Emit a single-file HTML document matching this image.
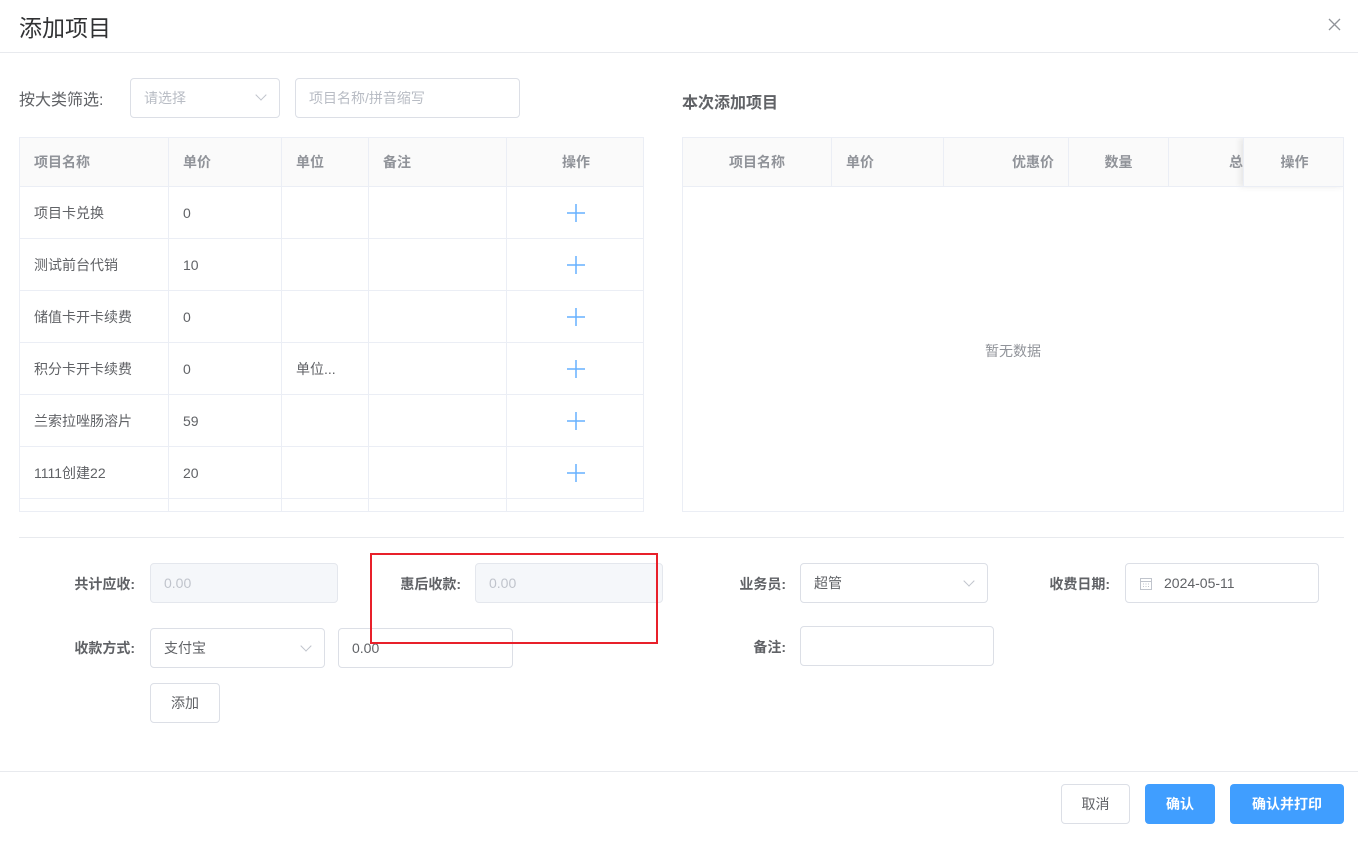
<!DOCTYPE html><html><head><meta charset="utf-8"><style>
*{box-sizing:border-box;margin:0;padding:0}
body{width:1358px;height:845px;background:#fff;font-family:"Liberation Sans","Noto Sans CJK SC",sans-serif;color:#606266;font-size:14px;position:relative;overflow:hidden}
.a{position:absolute}
.inp{position:absolute;border:1px solid #dcdfe6;border-radius:4px;background:#fff;display:flex;align-items:center;padding-left:13px;font-size:14px;color:#606266}
.dis{background:#f5f7fa;border-color:#e4e7ed;color:#c0c4cc}
.lbl{position:absolute;font-weight:bold;color:#606266;text-align:right;font-size:14px}
.chev{position:absolute;right:14px;top:13px;width:8px;height:8px;border-right:1px solid #c0c4cc;border-bottom:1px solid #c0c4cc;transform:rotate(45deg)}
table{border-collapse:collapse;position:absolute;table-layout:fixed}
td,th{border:1px solid #ebeef5;padding-left:14px;text-align:left;font-size:14px}
th{background:#fafafa;color:#909399;font-weight:bold;height:49px}
td{height:52px;color:#606266}
.plus{text-align:center;padding:0}
.plus svg{display:block;margin:0 auto}
.btn{position:absolute;border-radius:4px;display:flex;align-items:center;justify-content:center;font-size:14px}
</style></head><body>
<div class="a" style="left:19px;top:9px;font-size:23px;color:#303133">添加项目</div>
<svg class="a" style="left:1328px;top:18px" width="13" height="13"><path d="M1 1L12 12M12 1L1 12" stroke="#909399" stroke-width="1.3"/></svg>
<div class="a" style="left:0;top:52px;width:1358px;height:1px;background:#e8eaee"></div>

<div class="a" style="left:19px;top:86px;font-size:16px;color:#606266">按大类筛选:</div>
<div class="inp" style="left:130px;top:78px;width:150px;height:40px;color:#b8bcc4">请选择<div class="chev" style="top:12px"></div></div>
<div class="inp" style="left:295px;top:78px;width:225px;height:40px;color:#b8bcc4">项目名称/拼音缩写</div>
<div class="a" style="left:682px;top:89px;font-size:16px;font-weight:bold;color:#606266">本次添加项目</div>

<div class="a" style="left:19px;top:137px;width:625px;height:375px;overflow:hidden;border:1px solid #ebeef5">
<table style="left:-1px;top:-1px;width:626px">
<colgroup><col style="width:149px"><col style="width:113px"><col style="width:87px"><col style="width:138px"><col style="width:139px"></colgroup>
<tr><th>项目名称</th><th>单价</th><th>单位</th><th>备注</th><th style="text-align:center;padding:0">操作</th></tr>
<tr><td>项目卡兑换</td><td>0</td><td></td><td></td><td class="plus"><svg width="18" height="18"><path d="M9 0V18M0 9H18" stroke="#66b1ff" stroke-width="1.5"/></svg></td></tr>
<tr><td>测试前台代销</td><td>10</td><td></td><td></td><td class="plus"><svg width="18" height="18"><path d="M9 0V18M0 9H18" stroke="#66b1ff" stroke-width="1.5"/></svg></td></tr>
<tr><td>储值卡开卡续费</td><td>0</td><td></td><td></td><td class="plus"><svg width="18" height="18"><path d="M9 0V18M0 9H18" stroke="#66b1ff" stroke-width="1.5"/></svg></td></tr>
<tr><td>积分卡开卡续费</td><td>0</td><td>单位...</td><td></td><td class="plus"><svg width="18" height="18"><path d="M9 0V18M0 9H18" stroke="#66b1ff" stroke-width="1.5"/></svg></td></tr>
<tr><td>兰索拉唑肠溶片</td><td>59</td><td></td><td></td><td class="plus"><svg width="18" height="18"><path d="M9 0V18M0 9H18" stroke="#66b1ff" stroke-width="1.5"/></svg></td></tr>
<tr><td>1111创建22</td><td>20</td><td></td><td></td><td class="plus"><svg width="18" height="18"><path d="M9 0V18M0 9H18" stroke="#66b1ff" stroke-width="1.5"/></svg></td></tr>
<tr><td></td><td></td><td></td><td></td><td></td></tr>
</table></div>

<div class="a" style="left:682px;top:137px;width:662px;height:375px;overflow:hidden;border:1px solid #ebeef5">
<table style="left:-1px;top:-1px;width:663px">
<colgroup><col style="width:149px"><col style="width:112px"><col style="width:125px"><col style="width:100px"><col style="width:75px"><col style="width:102px"></colgroup>
<tr><th style="text-align:center;padding:0">项目名称</th><th>单价</th><th style="text-align:right;padding-right:14px">优惠价</th><th style="text-align:center;padding:0">数量</th><th style="text-align:right;padding-right:0">总</th><th style="text-align:center;padding:0;box-shadow:-4px 0 6px rgba(0,0,0,.08)">操作</th></tr>
</table>
<div class="a" style="left:0;top:203px;width:660px;text-align:center;color:#909399">暂无数据</div>
</div>

<div class="a" style="left:19px;top:537px;width:1325px;height:1px;background:#e8eaee"></div>

<div class="lbl" style="left:40px;top:574px;width:95px">共计应收:</div>
<div class="inp dis" style="left:150px;top:563px;width:188px;height:40px">0.00</div>
<div class="lbl" style="left:366px;top:574px;width:95px">惠后收款:</div>
<div class="inp dis" style="left:475px;top:563px;width:188px;height:40px">0.00</div>
<div class="lbl" style="left:691px;top:574px;width:95px">业务员:</div>
<div class="inp" style="left:800px;top:563px;width:188px;height:40px">超管<div class="chev"></div></div>
<div class="lbl" style="left:1015px;top:574px;width:95px">收费日期:</div>
<div class="inp" style="left:1125px;top:563px;width:194px;height:40px;padding-left:38px">2024-05-11
<svg class="a" style="left:14px;top:13px" width="12" height="13"><rect x="0.5" y="1.5" width="11" height="11" fill="none" stroke="#c0c4cc"/><path d="M0.5 4.5H11.5M3 7h1M5.5 7h1M8 7h1M3 9.5h1M5.5 9.5h1M8 9.5h1" stroke="#c0c4cc"/></svg></div>

<div class="lbl" style="left:40px;top:638px;width:95px">收款方式:</div>
<div class="inp" style="left:150px;top:628px;width:175px;height:40px">支付宝<div class="chev"></div></div>
<div class="inp" style="left:338px;top:628px;width:175px;height:40px">0.00</div>
<div class="lbl" style="left:691px;top:637px;width:95px">备注:</div>
<div class="inp" style="left:800px;top:626px;width:194px;height:40px"></div>
<div class="btn" style="left:150px;top:683px;width:70px;height:40px;border:1px solid #dcdfe6">添加</div>

<div class="a" style="left:370px;top:553px;width:288px;height:91px;border:2px solid #e8202a"></div>

<div class="a" style="left:0;top:771px;width:1358px;height:1px;background:#e8eaee"></div>
<div class="btn" style="left:1061px;top:784px;width:69px;height:40px;border:1px solid #dcdfe6">取消</div>
<div class="btn" style="left:1145px;top:784px;width:70px;height:40px;background:#409eff;color:#fff;font-weight:bold">确认</div>
<div class="btn" style="left:1230px;top:784px;width:114px;height:40px;background:#409eff;color:#fff;font-weight:bold">确认并打印</div>
</body></html>
